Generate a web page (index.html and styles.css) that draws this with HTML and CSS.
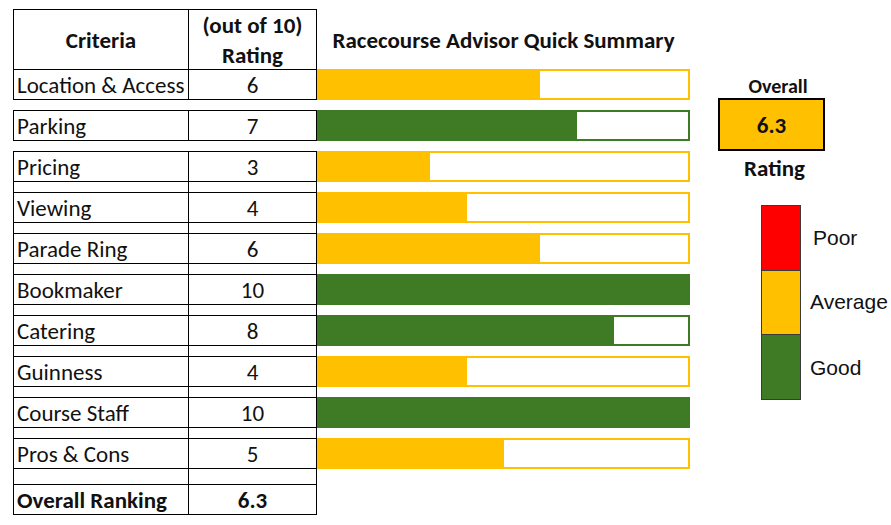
FILE: index.html
```html
<!DOCTYPE html>
<html>
<head>
<meta charset="utf-8">
<link rel="stylesheet" href="styles.css">
</head>
<body>
<div class="page">
  <div class="sheet">
    <div class="row head">
      <div class="cell c1 b">Criteria</div>
      <div class="cell c2 b"><div class="two">(out of 10)<br>Rating</div></div>
      <div class="c3 title">Racecourse Advisor Quick Summary</div>
    </div>
    <div class="row">
      <div class="cell c1">Location &amp; Access</div>
      <div class="cell c2">6</div>
      <div class="c3"><div class="bar avg"><div class="fill" style="width:60%"></div></div></div>
    </div>
    <div class="gap"><div class="g1"></div><div class="g2"></div></div>
    <div class="row">
      <div class="cell c1">Parking</div>
      <div class="cell c2">7</div>
      <div class="c3"><div class="bar good"><div class="fill" style="width:70%"></div></div></div>
    </div>
    <div class="gap"><div class="g1"></div><div class="g2"></div></div>
    <div class="row">
      <div class="cell c1">Pricing</div>
      <div class="cell c2">3</div>
      <div class="c3"><div class="bar avg"><div class="fill" style="width:30%"></div></div></div>
    </div>
    <div class="gap boxed"><div class="g1"></div><div class="g2"></div></div>
    <div class="row">
      <div class="cell c1">Viewing</div>
      <div class="cell c2">4</div>
      <div class="c3"><div class="bar avg"><div class="fill" style="width:40%"></div></div></div>
    </div>
    <div class="gap boxed"><div class="g1"></div><div class="g2"></div></div>
    <div class="row">
      <div class="cell c1">Parade Ring</div>
      <div class="cell c2">6</div>
      <div class="c3"><div class="bar avg"><div class="fill" style="width:60%"></div></div></div>
    </div>
    <div class="gap boxed"><div class="g1"></div><div class="g2"></div></div>
    <div class="row">
      <div class="cell c1">Bookmaker</div>
      <div class="cell c2">10</div>
      <div class="c3"><div class="bar good"><div class="fill" style="width:100%"></div></div></div>
    </div>
    <div class="gap boxed"><div class="g1"></div><div class="g2"></div></div>
    <div class="row">
      <div class="cell c1">Catering</div>
      <div class="cell c2">8</div>
      <div class="c3"><div class="bar good"><div class="fill" style="width:80%"></div></div></div>
    </div>
    <div class="gap boxed"><div class="g1"></div><div class="g2"></div></div>
    <div class="row">
      <div class="cell c1">Guinness</div>
      <div class="cell c2">4</div>
      <div class="c3"><div class="bar avg"><div class="fill" style="width:40%"></div></div></div>
    </div>
    <div class="gap boxed"><div class="g1"></div><div class="g2"></div></div>
    <div class="row">
      <div class="cell c1">Course Staff</div>
      <div class="cell c2">10</div>
      <div class="c3"><div class="bar good"><div class="fill" style="width:100%"></div></div></div>
    </div>
    <div class="gap boxed"><div class="g1"></div><div class="g2"></div></div>
    <div class="row">
      <div class="cell c1">Pros &amp; Cons</div>
      <div class="cell c2">5</div>
      <div class="c3"><div class="bar avg"><div class="fill" style="width:50%"></div></div></div>
    </div>
    <div class="gap boxed tall"><div class="g1"></div><div class="g2"></div></div>
    <div class="row last">
      <div class="cell c1 b">Overall Ranking</div>
      <div class="cell c2 b">6.3</div>
      <div class="c3"></div>
    </div>
  </div>
  <div class="side">
    <div class="overall">
      <div class="ov-label">Overall</div>
      <div class="ov-box">6.3</div>
      <div class="ov-rating">Rating</div>
    </div>
    <div class="legend">
      <div class="swatches">
        <div class="sw poor"></div>
        <div class="sw average"></div>
        <div class="sw goodc"></div>
      </div>
      <div class="labels">
        <div class="lab lab-poor">Poor</div>
        <div class="lab">Average</div>
        <div class="lab lab-good">Good</div>
      </div>
    </div>
  </div>
</div>
</body>
</html>
```

FILE: styles.css
```css
body {
  margin: 0;
  background: #ffffff;
  color: #111111;
  font-family: Carlito, Calibri, Lato, sans-serif;
}

.page {
  display: flex;
  padding: 9px 0 0 13px;
}

.sheet {
  width: 677px;
}

.row {
  display: flex;
  height: 30px;
}

.row.head {
  height: 60px;
}

.row.last {
  height: 31px;
}

.cell {
  box-sizing: border-box;
  border-top: 1px solid #000;
  border-left: 1px solid #000;
  display: flex;
  align-items: center;
  font-size: 23px;
  white-space: nowrap;
  padding-top: 1px;
}

.row.last .cell {
  border-bottom: 1px solid #000;
}

.c1 {
  width: 175px;
  padding-left: 3px;
}

.c2 {
  width: 129px;
  border-right: 1px solid #000;
  justify-content: center;
}

.c3 {
  width: 373px;
}

.head .c1 {
  justify-content: center;
  padding-left: 0;
}

.b {
  font-weight: 700;
}

.two {
  text-align: center;
  line-height: 30px;
}

.title {
  display: flex;
  align-items: center;
  justify-content: center;
  font-weight: 700;
  font-size: 23px;
  white-space: nowrap;
  padding-top: 2px;
}

.gap {
  display: flex;
  height: 11px;
}

.gap.tall {
  height: 16px;
}

.g1,
.g2 {
  box-sizing: border-box;
  border-top: 1px solid #000;
}

.g1 {
  width: 175px;
}

.g2 {
  width: 129px;
}

.gap.boxed .g1 {
  border-left: 1px solid #000;
}

.gap.boxed .g2 {
  border-left: 1px solid #000;
  border-right: 1px solid #000;
}

.bar {
  box-sizing: border-box;
  height: 31px;
  border: 2px solid;
  background: #ffffff;
}

.bar.avg {
  border-color: #ffc000;
}

.bar.avg .fill {
  background: #ffc000;
}

.bar.good {
  border-color: #3e7b24;
}

.bar.good .fill {
  background: #3e7b24;
}

.fill {
  height: 100%;
}

.side {
  display: flex;
  flex-direction: column;
  padding-left: 28px;
}

.overall {
  width: 107px;
  display: flex;
  flex-direction: column;
  align-items: stretch;
}

.ov-label {
  margin-top: 66px;
  font-weight: 700;
  font-size: 20px;
  line-height: 22px;
  text-align: center;
  padding-left: 13px;
  white-space: nowrap;
}

.ov-box {
  margin-top: 1px;
  height: 53px;
  box-sizing: border-box;
  border: 2px solid #000;
  background: #ffc000;
  display: flex;
  align-items: center;
  justify-content: center;
  font-weight: 700;
  font-size: 23px;
}

.ov-rating {
  margin-top: 5px;
  line-height: 24px;
  font-weight: 700;
  font-size: 23px;
  text-align: center;
  padding-left: 6px;
}

.legend {
  display: flex;
  align-items: flex-start;
  margin-top: 25px;
  margin-left: 43px;
}

.swatches {
  width: 38px;
  border: 1px solid #3a3a3a;
  display: flex;
  flex-direction: column;
}

.sw {
  height: 64px;
}

.sw.average {
  height: 65px;
  border-top: 1px solid #3a3a3a;
  border-bottom: 1px solid #3a3a3a;
  box-sizing: border-box;
}

.poor {
  background: #ff0000;
}

.average {
  background: #ffc000;
}

.goodc {
  background: #3e7b24;
}

.labels {
  display: flex;
  flex-direction: column;
  padding-top: 1px;
  margin-left: 9px;
  font-family: "Liberation Sans", Arial, sans-serif;
  font-size: 21px;
  color: #111;
}

.lab {
  box-sizing: border-box;
  height: 64px;
  display: flex;
  align-items: center;
  white-space: nowrap;
}

.lab-good {
  padding-top: 4px;
}

.lab-poor {
  padding-left: 3px;
}
```
